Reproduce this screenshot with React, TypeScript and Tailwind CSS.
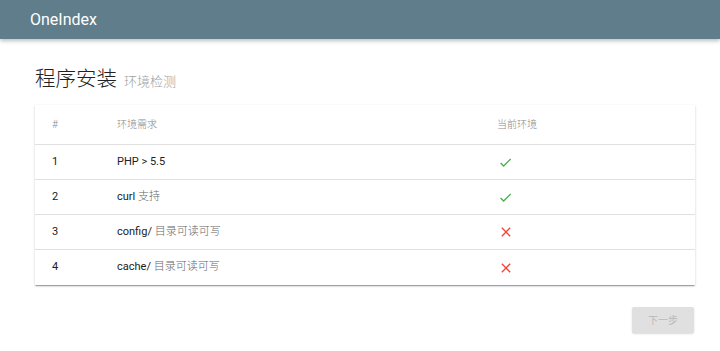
const rows = [
  { id: 1, name: "PHP > 5.5", note: "", ok: true },
  { id: 2, name: "curl ", note: "支持", ok: true },
  { id: 3, name: "config/ ", note: "目录可读可写", ok: false },
  { id: 4, name: "cache/ ", note: "目录可读可写", ok: false },
];

const font = { fontFamily: 'Roboto, "Noto Sans CJK SC", sans-serif' };

function CheckIcon() {
  return (
    <svg viewBox="0 0 24 24" className="w-[15px] h-[15px]" fill="#4caf50">
      <path d="M9 16.17L4.83 12l-1.42 1.41L9 19 21 7l-1.41-1.41z" />
    </svg>
  );
}

function CloseIcon() {
  return (
    <svg viewBox="0 0 24 24" className="w-[16px] h-[16px]" fill="#f44336">
      <path d="M19 6.41L17.59 5 12 10.59 6.41 5 5 6.41 10.59 12 5 17.59 6.41 19 12 13.41 17.59 19 19 17.59 13.41 12z" />
    </svg>
  );
}

export default function App() {
  return (
    <div className="w-[720px] min-h-[351px] bg-white" style={font}>
      <header className="h-[39px] bg-[#607d8b] flex items-center px-[30px] shadow-[0_2px_4px_rgba(0,0,0,0.25)]">
        <span className="text-white text-[16px]">OneIndex</span>
      </header>

      <main className="pl-[35px] pr-[25px]">
        <div className="mt-[25px] flex items-baseline gap-[7px] h-[28px]">
          <span className="text-[20.5px] text-[#212121] font-light">程序安装</span>
          <span className="text-[13px] text-[#9e9e9e] font-light">环境检测</span>
        </div>

        <div className="mt-[13px] bg-white shadow-[0_2px_1px_-1px_rgba(0,0,0,0.2),0_1px_1px_rgba(0,0,0,0.14),0_1px_3px_rgba(0,0,0,0.12)]">
          <div className="flex items-center h-[40px] border-b border-[#e0e0e0] text-[10px] text-[#8a8a8a] font-light">
            <div className="w-[82px] pl-[17px]">#</div>
            <div className="w-[380px]">环境需求</div>
            <div className="flex-1">当前环境</div>
          </div>
          {rows.map((r, i) => (
            <div
              key={r.id}
              className={`flex items-center h-[35px] text-[11px] text-[#212121] ${i < rows.length - 1 ? "border-b border-[#e0e0e0]" : ""}`}
            >
              <div className="w-[82px] pl-[17px]">{r.id}</div>
              <div className="w-[380px] whitespace-pre">
                {r.name}
                {r.note && <span className="text-[#666] font-light">{r.note}</span>}
              </div>
              <div className="flex-1 pl-[1px]">{r.ok ? <CheckIcon /> : <CloseIcon />}</div>
            </div>
          ))}
        </div>

        <div className="flex justify-end mt-[22px] pr-[1px]">
          <button
            type="button"
            disabled
            className="w-[62px] h-[26px] rounded-[2px] bg-[#e0e0e0] text-[10px] text-[#b8b8b8] shadow-[0_1px_2px_rgba(0,0,0,0.15)]"
          >
            下一步
          </button>
        </div>
      </main>
    </div>
  );
}
